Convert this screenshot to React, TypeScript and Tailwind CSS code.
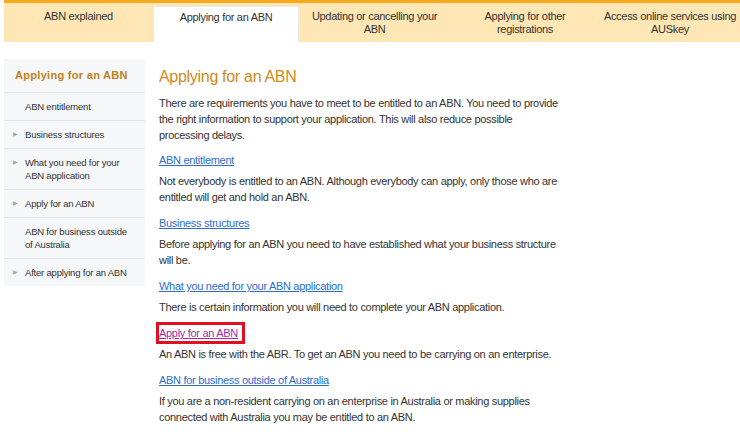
const TABS = [
  { label: "ABN explained", w: "w-[149px] px-3" },
  { label: "Applying for an ABN", w: "w-[146px] px-3", active: true },
  { label: "Updating or cancelling your ABN", w: "w-[151px] px-3" },
  { label: "Applying for other registrations", w: "w-[150px] px-[22px]" },
  { label: "Access online services using AUSkey", w: "flex-1 px-0" },
];

const SIDE = [
  { label: "ABN entitlement", arrow: false },
  { label: "Business structures", arrow: true },
  { label: "What you need for your ABN application", arrow: true },
  { label: "Apply for an ABN", arrow: true },
  { label: "ABN for business outside of Australia", arrow: false },
  { label: "After applying for an ABN", arrow: true },
];

const SECTIONS = [
  {
    link: "ABN entitlement",
    text: "Not everybody is entitled to an ABN. Although everybody can apply, only those who are entitled will get and hold an ABN.",
  },
  {
    link: "Business structures",
    text: "Before applying for an ABN you need to have established what your business structure will be.",
  },
  {
    link: "What you need for your ABN application",
    text: "There is certain information you will need to complete your ABN application.",
  },
  {
    link: "Apply for an ABN",
    text: "An ABN is free with the ABR. To get an ABN you need to be carrying on an enterprise.",
    visited: true,
  },
  {
    link: "ABN for business outside of Australia",
    text: "If you are a non-resident carrying on an enterprise in Australia or making supplies connected with Australia you may be entitled to an ABN.",
  },
];

export default function App() {
  return (
    <div className="min-h-[438px] bg-white pl-1 font-['Liberation_Sans',Arial,sans-serif] text-[11px] tracking-[-0.3px] text-[#333]">
      {/* top navigation */}
      <div className="flex h-[42px] border-t-[3px] border-[#f6a91f] bg-[#fee6b5]">
        {TABS.map(t => (
          <div
            key={t.label}
            className={`${t.w} text-center leading-[13px] ${
              t.active ? "mt-[3px] border-x border-t border-[#e9e9e9] bg-white pt-[4px]" : "pt-[7px]"
            }`}
          >
            {t.label}
          </div>
        ))}
      </div>

      <div className="flex">
        {/* side menu */}
        <div className="mt-[17px] w-[141px] shrink-0 self-start bg-[#f6f7f9]">
          <div className="whitespace-nowrap border-b border-[#e3e4e7] px-[11px] py-[10px] text-[11px] font-bold leading-[13px] tracking-[0.3px] text-[#c2801c]">
            Applying for an ABN
          </div>
          {SIDE.map((s, i) => (
            <div
              key={s.label}
              className={`flex py-[7px] pr-[12px] text-[9.5px] leading-[13px] tracking-[-0.2px] ${
                i < SIDE.length - 1 ? "border-b border-[#e3e4e7]" : ""
              }`}
            >
              <span className="w-[21px] shrink-0 pl-[9px] text-[6px] leading-[13px] text-[#a7a7a7]">
                {s.arrow ? "▶" : ""}
              </span>
              <span>{s.label}</span>
            </div>
          ))}
        </div>

        {/* main content */}
        <div className="ml-[14px] w-[400px] pt-[24px]">
          <h1 className="text-[16px] leading-[22px] tracking-[-0.3px] text-[#d08a20]">Applying for an ABN</h1>
          <p className="mt-[7px] leading-[16px]">
            There are requirements you have to meet to be entitled to an ABN. You need to provide the right
            information to support your application. This will also reduce possible processing delays.
          </p>
          {SECTIONS.map((s, i) => (
            <div key={s.link} className={i === 0 ? "mt-[9px]" : "mt-[10px]"}>
              <div className="leading-[16px]">
                {s.visited ? (
                  <span className="inline-block pr-[4px] outline-3 outline-[#e20f22]">
                    <a href="#" className="text-[#a22ba5] underline">
                      {s.link}
                    </a>
                  </span>
                ) : (
                  <a href="#" className="text-[#2c6dd0] underline">
                    {s.link}
                  </a>
                )}
              </div>
              <p className="mt-[5px] leading-[16px]">{s.text}</p>
            </div>
          ))}
        </div>
      </div>
    </div>
  );
}
